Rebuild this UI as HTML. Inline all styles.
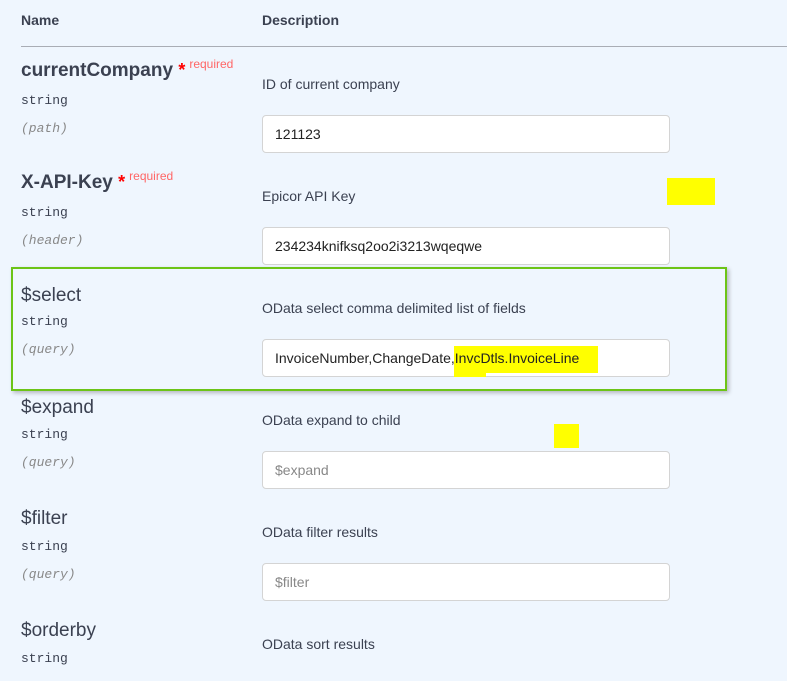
<!DOCTYPE html>
<html><head><meta charset="utf-8"><style>
body{margin:0;width:787px;height:681px;overflow:hidden;background:#eff6fe;font-family:"Liberation Sans",sans-serif;color:#3b4151;position:relative}
.a{position:absolute;white-space:nowrap}
.h{font-size:14px;font-weight:bold;top:12px}
.n{font-size:19px;left:21px}
.b{font-weight:bold}
.star{color:#f00;font-size:18px;font-weight:bold}
.req{color:#f66;font-size:12px;font-weight:normal;position:relative;top:-8px;margin-left:4px}
.t{font-family:"Liberation Mono",monospace;font-size:13px;left:21px}
.i{font-family:"Liberation Mono",monospace;font-size:13px;font-style:italic;color:#888;left:21px}
.d{font-size:14px;left:262px;color:#3b4151}
.in{position:absolute;left:262px;width:408px;height:38px;background:#fff;border:1px solid #d4d4d4;border-radius:4px;box-sizing:border-box;font-size:14px;padding:0 12px;line-height:36px;color:#222}
.ph{color:#888}
.y{position:absolute;background:#ffff00}
</style></head><body>
<div class="a h" style="left:21px">Name</div>
<div class="a h" style="left:262px">Description</div>
<div class="a" style="left:21px;top:46px;width:766px;height:1px;background:#a9adb5"></div>

<div class="a n b" style="top:60px">currentCompany <span class="star">*</span><span class="req">required</span></div>
<div class="a t" style="top:93px">string</div>
<div class="a i" style="top:121px">(path)</div>
<div class="a d" style="top:76px">ID of current company</div>
<div class="in" style="top:115px">121123</div>

<div class="a n b" style="top:172px">X-API-Key <span class="star">*</span><span class="req">required</span></div>
<div class="a t" style="top:205px">string</div>
<div class="a i" style="top:233px">(header)</div>
<div class="a d" style="top:188px">Epicor API Key</div>
<div class="in" style="top:227px">234234knifksq2oo2i3213wqeqwe</div>
<div class="y" style="left:667px;top:178px;width:48px;height:27px"></div>

<div class="a" style="left:11px;top:267px;width:712px;height:120px;border:2px solid #6cc417;box-shadow:2px 2px 4px rgba(0,0,0,.25)"></div>
<div class="a n" style="top:285px">$select</div>
<div class="a t" style="top:314px">string</div>
<div class="a i" style="top:342px">(query)</div>
<div class="a d" style="top:300px">OData select comma delimited list of fields</div>
<div class="in" style="top:339px"></div>
<div class="y" style="left:454px;top:346px;width:144px;height:27px"></div>
<div class="y" style="left:454px;top:370px;width:32px;height:7px"></div>
<div class="a" style="left:275px;top:350px;font-size:14px;color:#222">InvoiceNumber,ChangeDate,InvcDtls.InvoiceLine</div>

<div class="a n" style="top:397px">$expand</div>
<div class="a t" style="top:427px">string</div>
<div class="a i" style="top:455px">(query)</div>
<div class="a d" style="top:412px">OData expand to child</div>
<div class="in ph" style="top:451px">$expand</div>
<div class="y" style="left:554px;top:424px;width:25px;height:24px"></div>

<div class="a n" style="top:508px">$filter</div>
<div class="a t" style="top:539px">string</div>
<div class="a i" style="top:567px">(query)</div>
<div class="a d" style="top:524px">OData filter results</div>
<div class="in ph" style="top:563px">$filter</div>

<div class="a n" style="top:620px">$orderby</div>
<div class="a t" style="top:651px">string</div>
<div class="a d" style="top:636px">OData sort results</div>
</body></html>
